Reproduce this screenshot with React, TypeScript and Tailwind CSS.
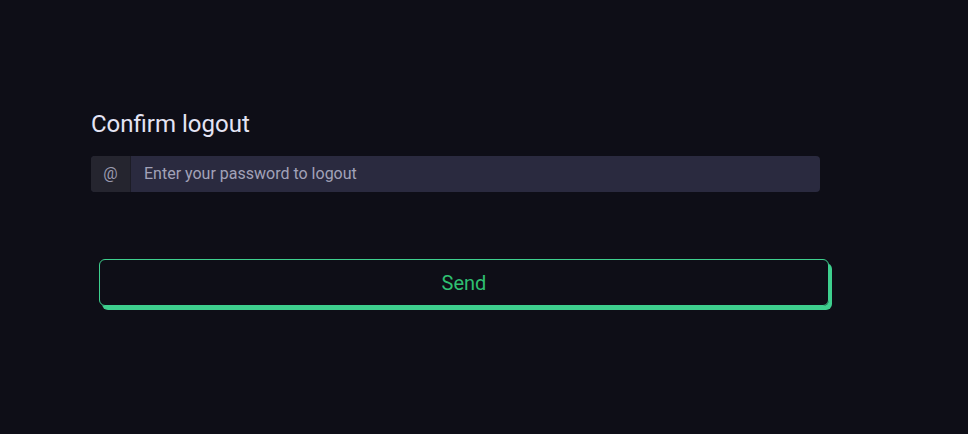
export default function App() {
  return (
    <div className="min-h-[434px] bg-[#0e0e17] font-['Roboto',sans-serif] pt-[108px] pl-[91px]">
      <div className="w-[729px]">
        <h1 className="text-[24px] leading-[32px] text-[#e4e4f4]">Confirm logout</h1>
        <div className="mt-[16px] flex h-[36px] rounded-[4px] overflow-hidden bg-[#2a2a3f]">
          <div className="w-[40px] flex items-center justify-center bg-[#25252f] text-[#9a9aae] text-[16px] border-r border-[#1c1c26]">
            @
          </div>
          <input
            className="flex-1 bg-transparent pl-[13px] pr-3 text-[16px] text-[#e4e4f4] placeholder:text-[#a2a2b8] outline-none"
            placeholder="Enter your password to logout"
          />
        </div>
        <button className="mt-[67px] ml-2 w-[730px] h-[47px] rounded-[6px] border border-[#3ecf8e] shadow-[3px_4px_0_0_#3ecf8e] text-[#2fbf71] text-[20px]">
          Send
        </button>
      </div>
    </div>
  );
}
